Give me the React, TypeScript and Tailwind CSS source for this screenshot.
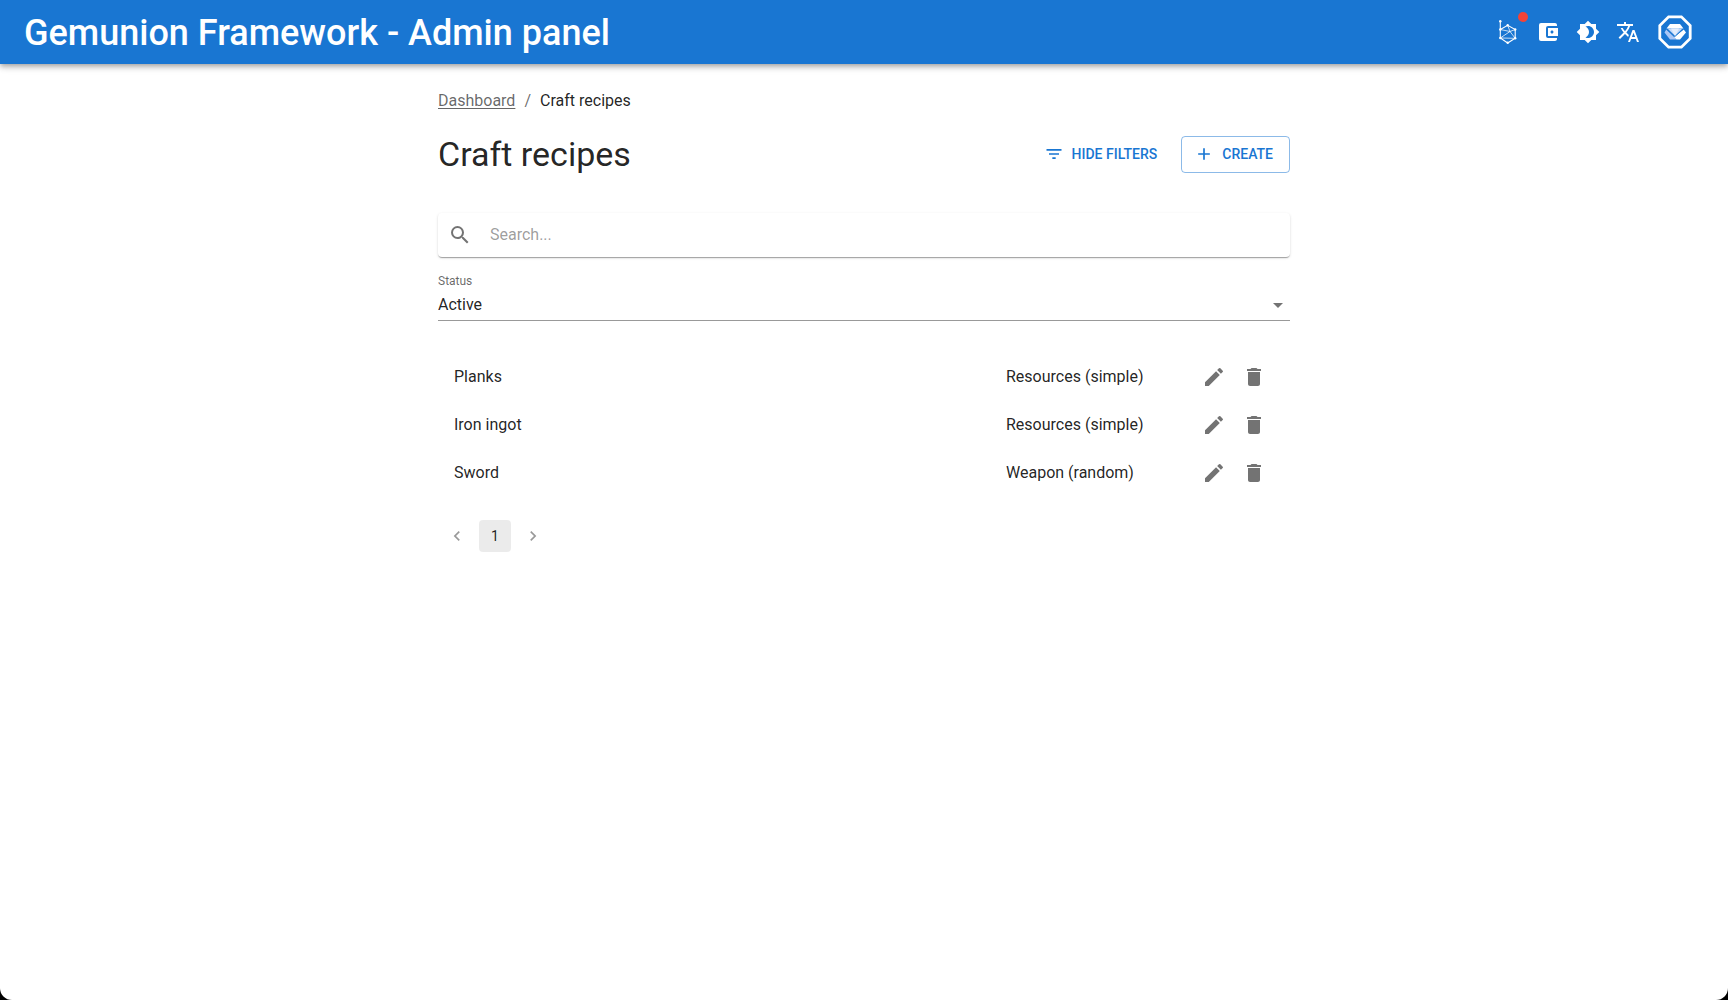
import type { ReactNode } from "react";
import {
  MdAccountBalanceWallet,
  MdAdd,
  MdArrowDropDown,
  MdBrightness4,
  MdCreate,
  MdDelete,
  MdFilterList,
  MdNavigateBefore,
  MdNavigateNext,
  MdSearch,
  MdTranslate,
} from "react-icons/md";

const recipes = [
  { title: "Planks", contract: "Resources (simple)" },
  { title: "Iron ingot", contract: "Resources (simple)" },
  { title: "Sword", contract: "Weapon (random)" },
];

function NetworkIcon() {
  return (
    <svg viewBox="0 0 24 24" className="size-6" fill="none" stroke="currentColor" strokeWidth="1">
      <path d="M4.3 1v17l7.400 5 7.500-4.700V9.500l-7.500-4.200-7.400 4.200" strokeWidth="1.100" />
      <path d="M4.3 9.500l9.700 2 5.200 6.800M4.3 18l9.700-6.500 5.200-2M11.700 5.300L14 11.500M4.300 18l14.900.3" opacity=".75" />
      <g fill="currentColor" stroke="none">
        <circle cx="4.3" cy="1.200" r="1.200" />
        <circle cx="4.3" cy="9.500" r="1.200" />
        <circle cx="4.3" cy="18" r="1.200" />
        <circle cx="11.700" cy="5.300" r="1.200" />
        <circle cx="19.200" cy="9.500" r="1.200" />
        <circle cx="19.200" cy="18.300" r="1.200" />
        <circle cx="11.700" cy="22.700" r="1.200" />
      </g>
    </svg>
  );
}

function GemLogo() {
  return (
    <svg viewBox="0 0 34 34" className="size-[34px]">
      <path d="M10.6 1.8h12.800l8.800 8.800v12.800l-8.800 8.800H10.600l-8.800-8.800V10.600z" fill="none" stroke="#fff" strokeWidth="2.800" />
      <path d="M12 9h10l3.500 4.500H8.500z" fill="#fff" />
      <path d="M9.500 13.500h15L17 21z" fill="#c5dafa" />
      <path d="M13 13.500h8L17 21z" fill="#e3edfc" />
      <path d="M8.300 14.500L6.500 17.500l5.500 7h6.500L16 22z" fill="#a9c6f5" />
      <path d="M25.700 14.500L28 17.500l-6 7h-3.500L16 22z" fill="#fff" />
      <path d="M8.500 14l8.500 7.500 8.500-7.500" fill="none" stroke="#1976d2" strokeWidth=".8" />
    </svg>
  );
}

function IconButton({ label, children }: { label: string; children: ReactNode }) {
  return (
    <button type="button" aria-label={label} className="relative flex size-10 items-center justify-center rounded-full">
      {children}
    </button>
  );
}

function Header() {
  return (
    <header className="flex h-16 items-center justify-between bg-[#1976d2] pr-9 pl-6 text-white shadow-[0_2px_4px_-1px_rgba(0,0,0,0.2),0_4px_5px_0_rgba(0,0,0,0.14),0_1px_10px_0_rgba(0,0,0,0.12)]">
      <a href="#" className="pt-px text-4xl font-medium">
        Gemunion Framework - Admin panel
      </a>
      <div className="flex items-center">
        <IconButton label="Network">
          <NetworkIcon />
          <span className="absolute top-0 right-0 size-2.5 rounded-full bg-[#f44336]" />
        </IconButton>
        <IconButton label="Wallet">
          <MdAccountBalanceWallet className="size-6" />
        </IconButton>
        <IconButton label="Theme">
          <MdBrightness4 className="size-6" />
        </IconButton>
        <IconButton label="Language">
          <MdTranslate className="size-6" />
        </IconButton>
        <button type="button" aria-label="Account" className="ml-2.5">
          <GemLogo />
        </button>
      </div>
    </header>
  );
}

function Filters() {
  return (
    <form className="mt-[38px]">
      <div className="flex h-11 items-center gap-[18px] rounded bg-white px-2.5 shadow-[0_2px_1px_-1px_rgba(0,0,0,0.2),0_1px_1px_0_rgba(0,0,0,0.14),0_1px_3px_0_rgba(0,0,0,0.12)]">
        <MdSearch className="size-6 text-black/55" />
        <input
          type="text"
          aria-label="Search"
          placeholder="Search..."
          className="min-w-0 flex-1 outline-none placeholder:text-black/40"
        />
      </div>
      <div className="relative mt-4 border-b border-black/40">
        <label htmlFor="status" className="block text-xs text-black/60">
          Status
        </label>
        <select id="status" className="block h-[31px] w-full appearance-none bg-transparent outline-none">
          <option>Active</option>
        </select>
        <MdArrowDropDown className="pointer-events-none absolute right-0 bottom-[3px] size-6 text-black/55" />
      </div>
    </form>
  );
}

function RecipeList() {
  return (
    <ul className="mt-8">
      {recipes.map((recipe) => (
        <li key={recipe.title} className="flex h-12 items-center px-4">
          <span className="flex-1">{recipe.title}</span>
          <span className="w-[188px]">{recipe.contract}</span>
          <div className="flex text-black/55">
            <IconButton label={`Edit ${recipe.title}`}>
              <MdCreate className="size-6" />
            </IconButton>
            <IconButton label={`Delete ${recipe.title}`}>
              <MdDelete className="size-6" />
            </IconButton>
          </div>
        </li>
      ))}
    </ul>
  );
}

function Pagination() {
  return (
    <nav aria-label="Pagination" className="mt-[23px] flex gap-1.5 px-[3px] text-sm">
      <button type="button" disabled aria-label="Previous page" className="flex size-8 items-center justify-center text-black/40">
        <MdNavigateBefore className="size-5" />
      </button>
      <button type="button" aria-current="page" className="size-8 rounded bg-black/8">
        1
      </button>
      <button type="button" disabled aria-label="Next page" className="flex size-8 items-center justify-center text-black/40">
        <MdNavigateNext className="size-5" />
      </button>
    </nav>
  );
}

export default function App() {
  return (
    <div className="flex min-h-screen bg-black font-['Roboto',sans-serif] text-base text-black/87">
      <div className="w-full rounded-b-xl bg-white">
        <Header />
        <main className="mx-auto max-w-[900px] px-6 pt-[25px]">
          <nav aria-label="Breadcrumb" className="flex gap-[9px] text-black/60">
            <a href="#" className="underline underline-offset-2">
              Dashboard
            </a>
            <span>/</span>
            <span className="text-black/87">Craft recipes</span>
          </nav>
          <div className="mt-5 flex items-center justify-between">
            <h1 className="text-[34px] leading-[42px]">Craft recipes</h1>
            <div className="flex items-center gap-4 text-sm font-medium text-[#1976d2]">
              <button type="button" className="flex h-9 items-center gap-2 rounded px-2 uppercase">
                <MdFilterList className="size-5" />
                Hide filters
              </button>
              <button type="button" className="flex h-[37px] items-center gap-2 rounded border border-[#1976d2]/50 pr-4 pl-3 uppercase">
                <MdAdd className="size-5" />
                Create
              </button>
            </div>
          </div>
          <Filters />
          <RecipeList />
          <Pagination />
        </main>
      </div>
    </div>
  );
}
